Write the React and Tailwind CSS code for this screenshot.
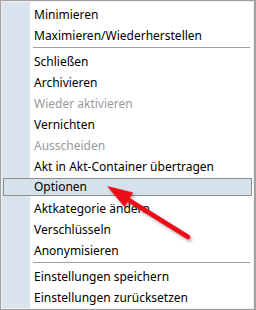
const ITEMS = [
  { label: "Minimieren" },
  { label: "Maximieren/Wiederherstellen" },
  { sep: true },
  { label: "Schließen" },
  { label: "Archivieren" },
  { label: "Wieder aktivieren", disabled: true },
  { label: "Vernichten" },
  { label: "Ausscheiden", disabled: true },
  { label: "Akt in Akt-Container übertragen" },
  { label: "Optionen", active: true },
  { label: "Aktkategorie ändern" },
  { label: "Verschlüsseln" },
  { label: "Anonymisieren" },
  { sep: true },
  { label: "Einstellungen speichern" },
  { label: "Einstellungen zurücksetzen" },
];

function MenuRow({ label, disabled, active }) {
  if (active) {
    return (
      <div className="h-[21px] px-[1px] pt-[1px] pb-[2px]">
        <div className="flex h-full items-center border border-[#8e8e8e] bg-[#d5e1eb] pl-[30px]">
          <span className="text-black">{label}</span>
        </div>
      </div>
    );
  }
  return (
    <div className="flex h-[21px] items-center pl-[32px]">
      <span className={disabled ? "text-[#9a9a9a]" : "text-black"}>{label}</span>
    </div>
  );
}

// red pointer arrow drawn over the menu
function Arrow() {
  return (
    <svg className="pointer-events-none absolute inset-0" width="256" height="310">
      <defs>
        <filter id="sh" x="-20%" y="-20%" width="140%" height="140%">
          <feDropShadow dx="1.5" dy="2" stdDeviation="1.5" floodColor="#000" floodOpacity="0.35" />
        </filter>
      </defs>
      <g filter="url(#sh)">
        <line x1="187" y1="236" x2="126" y2="198" stroke="#ec1118" strokeWidth="4.6" strokeLinecap="round" />
        <polygon points="106,185 132,191.5 123.5,206" fill="#ec1118" />
      </g>
    </svg>
  );
}

export default function App() {
  return (
    <div
      className="relative h-[310px] w-[256px] overflow-hidden border border-r-2 border-[#a0a0a0] bg-white text-[12px] leading-none"
      style={{ fontFamily: '"Noto Sans", "Open Sans", sans-serif' }}
    >
      <div className="flex h-full border border-[#f0f0f0]">
        <div className="relative flex-1">
          {/* left icon stripe */}
          <div className="absolute inset-y-0 left-0 w-[28px] bg-[#d9e4ee]" />
          <div className="relative pt-[2px]">
            {ITEMS.map((it, i) =>
              it.sep ? (
                <div key={i} className="h-[5px] pl-[31px] pr-[3px] pt-[1px]">
                  <div className="h-px bg-[#a0a0a0]" />
                </div>
              ) : (
                <MenuRow key={i} {...it} />
              )
            )}
          </div>
        </div>
      </div>
      <Arrow />
    </div>
  );
}
